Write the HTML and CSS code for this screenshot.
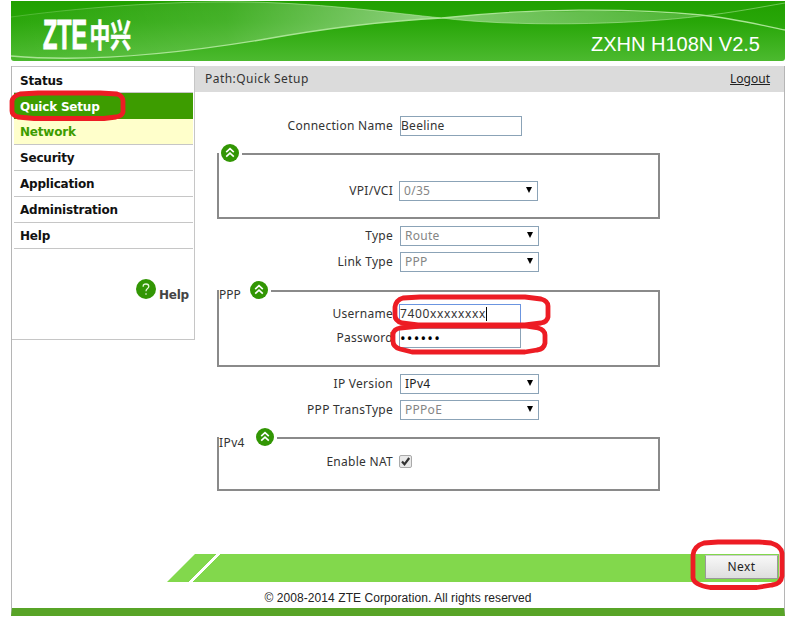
FILE: index.html
```
<!doctype html>

<html lang="en">

<head>
    <meta charset="utf-8">
    <title>ZXHN H108N V2.5</title>
    <link rel="stylesheet" href="styles.css">
</head>

<body>

<!-- collapse icon, shared by the groups -->
<svg class="defs" width="0" height="0">
    <symbol id="collapse" viewBox="0 0 18 18">
        <circle cx="9" cy="9" r="9" fill="#329604"/>
        <path d="M5.2 8.2L9 4.6l3.8 3.6M5.2 12.7L9 9.1l3.8 3.6" fill="none" stroke="#fff" stroke-width="1.6"/>
    </symbol>
</svg>

<div class="page">

    <div class="header">
        <svg class="waves" viewBox="0 0 774 60">
            <defs>
                <linearGradient id="left" x1="0" x2="1">
                    <stop offset="0" stop-color="#fff" stop-opacity="0.02"/>
                    <stop offset="0.5" stop-color="#fff" stop-opacity="0.14"/>
                    <stop offset="1" stop-color="#fff" stop-opacity="0.5"/>
                </linearGradient>
                <linearGradient id="right" x1="0" x2="1">
                    <stop offset="0" stop-color="#fff" stop-opacity="0.42"/>
                    <stop offset="1" stop-color="#fff" stop-opacity="0.18"/>
                </linearGradient>
                <linearGradient id="upper" x1="0" x2="1">
                    <stop offset="0" stop-color="#b9eca6" stop-opacity="0.25"/>
                    <stop offset="0.4" stop-color="#b9eca6" stop-opacity="0.6"/>
                    <stop offset="1" stop-color="#b9eca6" stop-opacity="0.5"/>
                </linearGradient>
            </defs>
            <path d="M0 16C90 4 170 0 240 1C320 3 380 12 431 17C370 20 310 28 249 39C170 52 80 62 0 55Z" fill="url(#left)"/>
            <path d="M431 17C500 9 620 7 690 15C620 24 500 26 431 17Z" fill="url(#right)"/>
            <path d="M0 16C90 4 170 0 240 1C320 3 380 12 431 17C500 26 620 24 690 15C720 12 750 6 774 2" fill="none" stroke="url(#upper)"/>
            <path d="M0 55C80 62 170 52 249 39C310 28 370 20 431 17C520 7 620 7 690 14C720 17 750 24 774 29" fill="none" stroke="#a9e494" stroke-width="1.3"/>
        </svg>
        <svg class="logo" width="92" height="34" viewBox="0 0 92 34">
            <text class="logo-latin" x="1" y="32" textLength="44" lengthAdjust="spacingAndGlyphs">ZTE</text>
            <text class="logo-han" x="0" y="0" transform="translate(47.5 29.5) scale(0.65 1)">中兴</text>
        </svg>
        <div class="model">ZXHN H108N V2.5</div>
    </div>

    <div class="body">
        <div class="columns">
            <div class="sidebar">
                <ul class="menu">
                    <li>Status</li>
                    <li class="active">Quick Setup</li>
                    <li class="current">Network</li>
                    <li>Security</li>
                    <li>Application</li>
                    <li>Administration</li>
                    <li>Help</li>
                </ul>
                <div class="help">
                    <svg width="20" height="20" viewBox="0 0 20 20">
                        <circle cx="10" cy="10" r="10" fill="#329604"/>
                        <path d="M7.2 7.8V7c0-1 1.200-2 2.800-2s2.800 1 2.800 2.500c0 2.200-2.800 1.900-2.800 4.700M10 14.300v1.500" fill="none" stroke="#e4f5da" stroke-width="1.300"/>
                    </svg>
                    <span>Help</span>
                </div>
            </div>

            <div class="main">
                <div class="path">
                    <span class="path-text">Path:Quick Setup</span>
                    <a class="logout">Logout</a>
                </div>

                <div class="form">
                    <div class="row first">
                        <label>Connection Name</label>
                        <div class="input">Beeline</div>
                    </div>

                    <div class="group group-vpi">
                        <div class="legend"><svg><use href="#collapse"/></svg></div>
                        <div class="row">
                            <label>VPI/VCI</label>
                            <div class="select disabled">0/35</div>
                        </div>
                    </div>

                    <div class="row type">
                        <label>Type</label>
                        <div class="select disabled">Route</div>
                    </div>
                    <div class="row">
                        <label>Link Type</label>
                        <div class="select disabled">PPP</div>
                    </div>

                    <div class="group group-ppp">
                        <div class="legend"><span>PPP</span><svg><use href="#collapse"/></svg></div>
                        <div class="row">
                            <label>Username</label>
                            <div class="input focus">7400xxxxxxxx<i class="caret"></i></div>
                        </div>
                        <div class="row">
                            <label>Password</label>
                            <div class="input password">••••••</div>
                        </div>
                    </div>

                    <div class="row ip">
                        <label>IP Version</label>
                        <div class="select">IPv4</div>
                    </div>
                    <div class="row">
                        <label>PPP TransType</label>
                        <div class="select disabled">PPPoE</div>
                    </div>

                    <div class="group group-ipv4">
                        <div class="legend"><span>IPv4</span><svg><use href="#collapse"/></svg></div>
                        <div class="row">
                            <label>Enable NAT</label>
                            <div class="checkbox">
                                <svg width="11" height="11" viewBox="0 0 11 11"><path d="M2 5.500l2.500 2.800L9.200 2" fill="none" stroke="#333" stroke-width="2.200"/></svg>
                            </div>
                        </div>
                    </div>
                </div>
            </div>
        </div>

        <div class="actions">
            <div class="next">Next</div>
        </div>
        <div class="copyright"><span>© 2008-2014 ZTE Corporation. All rights reserved</span></div>
    </div>
</div>

<!-- red marker outlines over the page -->
<svg class="marks" width="802" height="628" viewBox="0 0 802 628">
    <path d="M20 94L38 93H100L117 94Q123 96 123 101V112Q122 116 116 117L104 118.500H34L18 117Q12 115 12 111V101Q13 96 20 94Z"/>
    <path d="M403 298L420 297H525L541 299Q548 301 548 306V317Q547 322 541 323L525 325H418L402 323Q395 321 395 315V307Q396 300 403 298Z"/>
    <path d="M400 328L420 326H525L538 328Q545 330 545 335V343Q544 349 537 350L525 352H412L400 349Q393 347 393 341V334Q394 329 400 328Z"/>
    <path d="M704 543L718 542H759L771 543Q781 546 782 553V576Q781 584 772 585L757 587.500H710Q694 585 693 578V555Q694 546 704 543Z"/>
</svg>

</body>

</html>
```
FILE: styles.css
```
html,
body {
    padding: 0;
    margin: 0;
    background: #fff;
    color: #333;
    font: 12px "Noto Sans", sans-serif;
}

body {
    position: relative;
    height: 628px;
    overflow: hidden;
}

.defs {
    position: absolute;
}

.page {
    width: 774px;
    margin-left: 11px;
    padding-top: 1px;
}

.header {
    position: relative;
    display: flex;
    justify-content: space-between;
    height: 60px;
    border-radius: 0 0 3px 3px;
    background: linear-gradient(#21a000, #28a608 35%, #4cba2f);
}

.waves {
    position: absolute;
    left: 0;
    top: 0;
    width: 774px;
    height: 60px;
}

.logo {
    position: relative;
    margin: 16px 0 0 31px;
    fill: #fff;
    stroke: #fff;
    overflow: visible;
}

.logo-latin {
    font: bold 42px "Liberation Sans", sans-serif;
    stroke-width: 1.2px;
}

.logo-han {
    font: bold 32px "Noto Sans CJK SC", sans-serif;
    stroke-width: 0.6px;
}

.model {
    position: relative;
    margin: 31px 25px 0 0;
    color: #fff;
    font: 20px/24px "Liberation Sans", sans-serif;
}

.body {
    box-sizing: border-box;
    height: 550px;
    margin-top: 5px;
    border: 1px solid #b5b5b5;
    border-top: 0;
    border-bottom: 8px solid #58a427;
}

.columns {
    display: flex;
    height: 488px;
}

.sidebar {
    box-sizing: border-box;
    width: 183px;
    height: 274px;
    padding: 1px 1px 0;
    border: 1px solid #c6c6c6;
    border-left: 0;
}

.menu {
    margin: 0;
    padding: 0 0 0 1px;
    list-style: none;
    color: #111;
}

.menu li {
    box-sizing: border-box;
    height: 26px;
    padding-left: 6px;
    border-bottom: 1px solid #c6c6c6;
    font: bold 12px/27px "DejaVu Sans", sans-serif;
    letter-spacing: -0.2px;
}

.menu li:first-child {
    height: 25px;
}

.menu .active {
    background: #3d9c00;
    border-color: #3d9c00;
    color: #fff;
    line-height: 28px;
}

.menu .current {
    background: #ffffcb;
    color: #3d9c00;
}

.help {
    display: flex;
    justify-content: flex-end;
    margin: 30px 4px 0 0;
    color: #444;
    font: bold 12px/16px "DejaVu Sans", sans-serif;
    letter-spacing: -0.2px;
}

.help span {
    margin: 8px 0 0 3px;
}

.main {
    flex: 1;
}

.path {
    display: flex;
    justify-content: space-between;
    padding: 0 14px 0 10px;
    height: 26px;
    background: #dbdbdb;
    line-height: 26px;
}

.path-text {
    letter-spacing: 0.45px;
}

.logout {
    color: #222;
    text-decoration: underline;
}

.form {
    padding-left: 22px;
}

.row {
    display: flex;
    height: 20px;
    margin-bottom: 6px;
    letter-spacing: 0.28px;
    line-height: 19px;
}

.row label {
    width: 176px;
    margin-right: 7px;
    text-align: right;
    white-space: nowrap;
}

.first {
    margin: 24px 0 17px;
}

.type {
    margin-top: 7px;
}

.ip {
    margin-top: 7px;
}

.input,
.select {
    box-sizing: border-box;
    height: 20px;
    border: 1px solid #8ba3b7;
    line-height: 18px;
}

.input {
    width: 122px;
}

.select {
    display: flex;
    justify-content: space-between;
    align-items: center;
    width: 139px;
    padding: 0 5px 0 4px;
    color: #222;
}

.select::after {
    content: "";
    margin-top: -2px;
    border: 3.5px solid transparent;
    border-top: 6px solid #000;
    border-bottom: 0;
}

.disabled {
    color: #858585;
}

.group {
    position: relative;
    box-sizing: border-box;
    width: 443px;
    border: 2px solid #8a8a8a;
}

.group .row label {
    width: 174px;
    margin-right: 6px;
}

.group-vpi {
    height: 66px;
    padding-top: 26px;
}

.group-ppp {
    height: 77px;
    margin-top: 18px;
    padding-top: 12px;
}

.group-ppp .row {
    margin-bottom: 4px;
}

.group-ipv4 {
    height: 54px;
    margin-top: 17px;
    padding-top: 13px;
}

/* the legend sits on the top border and hides it */
.legend {
    position: absolute;
    left: 0;
    top: -11px;
    display: flex;
    height: 18px;
    padding-right: 3px;
    background: #fff;
}

.group-vpi .legend {
    padding-left: 2px;
}

.legend svg {
    width: 18px;
    height: 18px;
}

.legend span {
    margin: 5px 9px 0 0;
    line-height: 18px;
}

.group-ipv4 .legend span {
    margin: 6px 11px 0 0;
    letter-spacing: 0.4px;
}

.focus {
    border-color: #6b95e0;
    letter-spacing: 0.65px;
}

.caret {
    display: inline-block;
    width: 1px;
    height: 14px;
    background: #000;
    vertical-align: -3px;
}

.password {
    color: #000;
    font-size: 15px;
    letter-spacing: 1.2px;
}

.checkbox {
    box-sizing: border-box;
    width: 13px;
    height: 13px;
    margin-top: 3px;
    border: 1px solid #aaa;
    border-radius: 2px;
    background: #e9e9e9;
}

.checkbox svg {
    display: block;
}

.actions {
    display: flex;
    justify-content: flex-end;
    box-sizing: border-box;
    width: 612px;
    height: 28px;
    margin-left: 155px;
    padding: 1px 1px 0 0;
    background: linear-gradient(135deg, #82d84c 35.3px, #fff 35.3px, #fff 38px, #82d84c 38px);
    clip-path: polygon(28px 0, 100% 0, 100% 100%, 0 100%);
}

.next {
    box-sizing: border-box;
    width: 73px;
    height: 24px;
    border: 1px solid #999;
    border-top-color: #ccc;
    background: linear-gradient(#f8f8f8, #dedede);
    color: #222;
    letter-spacing: 0.4px;
    text-align: center;
    line-height: 22px;
}

.copyright {
    padding-top: 8px;
    color: #222;
    font: 12px/16px "Liberation Sans", sans-serif;
    letter-spacing: 0.07px;
    text-align: center;
}

.marks {
    position: absolute;
    left: 0;
    top: 0;
    fill: none;
    stroke: #ed1c24;
    stroke-width: 4.8;
    stroke-linejoin: round;
}
```
